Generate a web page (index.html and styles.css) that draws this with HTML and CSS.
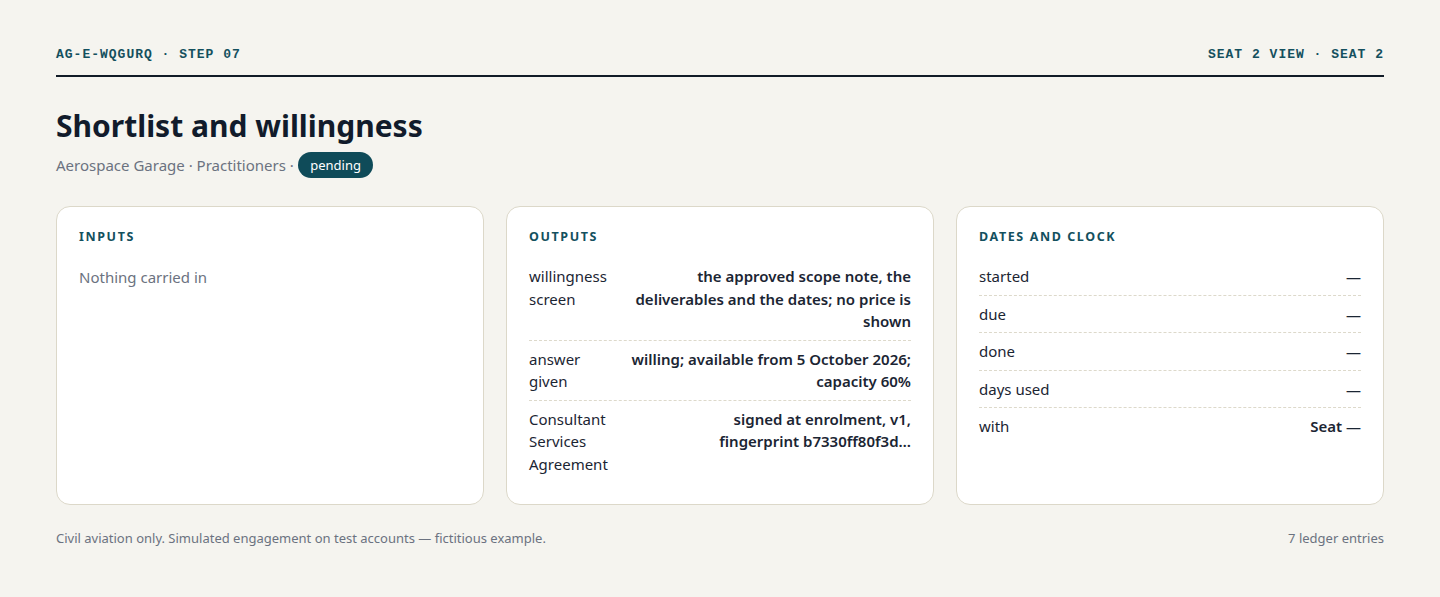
FILE: index.html
```html
<html>
<head>
<meta charset="utf-8">
<link rel="stylesheet" href="styles.css">
</head>
<body>
<div class="page">
	<div class="topbar">
		<span>AG-E-WQGURQ · STEP 07</span>
		<span>SEAT 2 VIEW · SEAT 2</span>
	</div>

	<h1 class="title">Shortlist and willingness</h1>
	<div class="sub">Aerospace Garage · Practitioners · <span class="pill">pending</span></div>

	<div class="cards">
		<div class="card">
			<div class="card_head">INPUTS</div>
			<div class="empty">Nothing carried in</div>
		</div>

		<div class="card">
			<div class="card_head">OUTPUTS</div>
			<div class="out_row">
				<div class="out_key">willingness screen</div>
				<div class="out_val">the approved scope note, the deliverables and the dates; no price is shown</div>
			</div>
			<div class="out_row">
				<div class="out_key">answer given</div>
				<div class="out_val">willing; available from 5 October 2026; capacity 60%</div>
			</div>
			<div class="out_row">
				<div class="out_key">Consultant Services Agreement</div>
				<div class="out_val">signed at enrolment, v1, fingerprint&nbsp;b7330ff80f3d…</div>
			</div>
		</div>

		<div class="card">
			<div class="card_head">DATES AND CLOCK</div>
			<div class="date_row"><span>started</span><b>—</b></div>
			<div class="date_row"><span>due</span><b>—</b></div>
			<div class="date_row"><span>done</span><b>—</b></div>
			<div class="date_row"><span>days used</span><b>—</b></div>
			<div class="date_row"><span>with</span><b>Seat —</b></div>
		</div>
	</div>

	<div class="foot">
		<span>Civil aviation only. Simulated engagement on test accounts — fictitious example.</span>
		<span>7 ledger entries</span>
	</div>
</div>
</body>
</html>
```

FILE: styles.css
```css
body {
	margin: 0;
	background-color: #f5f4ef;
	font-family: "Noto Sans", "Open Sans", sans-serif;
	color: #1b2533;
}
.page {
	padding: 47px 56px 0 56px;
}
.topbar {
	display: flex;
	justify-content: space-between;
	font-family: "Liberation Mono", monospace;
	font-weight: bold;
	font-size: 13px;
	letter-spacing: 1px;
	color: #14505e;
	padding-bottom: 13px;
	border-bottom: 2px solid #111b27;
}
.title {
	margin: 29px 0 0 0;
	font-size: 30px;
	font-weight: bold;
	line-height: 40px;
	color: #111b2b;
}
.sub {
	margin-top: 6px;
	font-size: 15px;
	line-height: 26px;
	color: #6b7280;
}
.pill {
	display: inline-block;
	background-color: #0f4b59;
	color: #ffffff;
	font-size: 13px;
	line-height: 26px;
	padding: 0 12.5px;
	border-radius: 13px;
	vertical-align: top;
}
.cards {
	display: grid;
	grid-template-columns: 1fr 1fr 1fr;
	gap: 22px;
	margin-top: 28px;
}
.card {
	background-color: #ffffff;
	border: 1px solid #dcd8c9;
	border-radius: 14px;
	padding: 21px 22px 22px 22px;
	min-height: 253px;
}
.card_head {
	font-size: 12.5px;
	font-weight: bold;
	letter-spacing: 1.6px;
	line-height: 18px;
	color: #13505e;
	margin-bottom: 12px;
}
.empty {
	font-size: 15px;
	line-height: 22px;
	color: #6b7280;
	padding-top: 8px;
}
.out_row {
	display: grid;
	grid-template-columns: 88px 1fr;
	gap: 14px;
	font-size: 15px;
	line-height: 22.5px;
	padding: 7px 0 7px 0;
	border-bottom: 1px dashed #ddd9cb;
}
.out_row:last-child {
	border-bottom: none;
}
.out_val {
	text-align: right;
	font-weight: 600;
}
.date_row {
	display: flex;
	justify-content: space-between;
	font-size: 15px;
	line-height: 22.5px;
	padding: 7px 0 7px 0;
	border-bottom: 1px dashed #ddd9cb;
}
.date_row:last-child {
	border-bottom: none;
}
.date_row b {
	font-weight: 600;
}
.foot {
	display: flex;
	justify-content: space-between;
	margin-top: 24px;
	font-size: 13px;
	color: #6b7280;
}
```
